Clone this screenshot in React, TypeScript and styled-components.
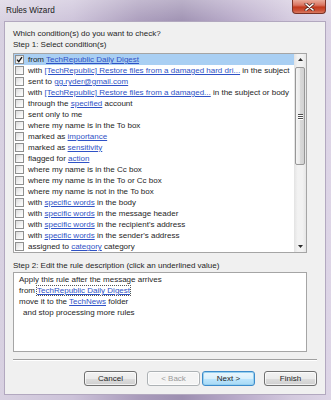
import styled, { createGlobalStyle } from 'styled-components';

const GlobalStyle = createGlobalStyle`
  html, body {
    margin: 0;
    padding: 0;
  }
  body {
    width: 331px;
    height: 400px;
    overflow: hidden;
    background: #fff;
  }
`;

const Window = styled.div`
  width: 331px;
  height: 400px;
  box-sizing: border-box;
  display: flex;
  flex-direction: column;
  font-family: 'Liberation Sans', Arial, sans-serif;
  font-size: 8px;
  color: #1e1e1e;
  background:
    linear-gradient(180deg, rgba(255, 255, 255, 0.3) 0px, rgba(255, 255, 255, 0) 24px),
    linear-gradient(90deg, #d8d1e1 0%, #ccc2d9 22%, #a99bbb 42%, #9d8fb1 55%, #b9abca 72%, #d3c9de 88%, #ddd5e6 100%);
`;

const TitleBar = styled.div`
  height: 21px;
  flex: none;
  display: flex;
  align-items: flex-start;
  justify-content: space-between;
  padding: 0 5px 0 6px;
`;

const Title = styled.div`
  line-height: 21px;
  font-size: 8.2px;
  color: #1a1a1a;
`;

const CloseButton = styled.div`
  width: 34px;
  height: 14px;
  box-sizing: border-box;
  border: 1px solid #7a3327;
  border-top: none;
  border-radius: 0 0 4px 4px;
  background: linear-gradient(180deg, #e9ab9b 0%, #d97461 40%, #c2391d 55%, #cc5238 80%, #d97a62 100%);
  display: flex;
  align-items: center;
  justify-content: center;
`;

const Client = styled.div`
  flex: 1;
  margin: 0 5px 5px 4px;
  background: #f0f0f0;
  border: 1px solid #b2a8bf;
  padding: 6px 8px 0 8px;
  display: flex;
  flex-direction: column;
`;

const Label = styled.div<{ $gap?: number }>`
  line-height: 11px;
  margin-top: ${(p) => p.$gap ?? 0}px;
  white-space: nowrap;
`;

const ListBox = styled.div`
  margin-top: 3px;
  width: 294px;
  height: 200px;
  box-sizing: border-box;
  border: 1px solid #a5a5a5;
  background: #fff;
  display: flex;
  overflow: hidden;
`;

const Rows = styled.div`
  flex: 1;
  display: flex;
  flex-direction: column;
  overflow: hidden;
`;

const Row = styled.div<{ $selected?: boolean }>`
  height: 11px;
  flex: none;
  display: flex;
  align-items: center;
  gap: 4px;
  padding-left: 1px;
  white-space: nowrap;
  background: ${(p) => (p.$selected ? '#a9cff3' : 'transparent')};
`;

const Check = styled.div`
  width: 9px;
  height: 9px;
  flex: none;
  box-sizing: border-box;
  border: 1px solid #8e8f8f;
  background: linear-gradient(135deg, #dcdcdc 0%, #f4f4f4 60%, #fff 100%);
  display: flex;
  align-items: center;
  justify-content: center;
`;

const Link = styled.span<{ $focus?: boolean }>`
  color: #2f52c6;
  text-decoration: underline;
  outline: ${(p) => (p.$focus ? '1px dotted #555' : 'none')};
  outline-offset: 0;
`;

const ScrollBar = styled.div`
  width: 12px;
  flex: none;
  display: flex;
  flex-direction: column;
  background: linear-gradient(90deg, #e3e3e3 0%, #f2f2f2 30%, #f2f2f2 70%, #e6e6e6 100%);
`;

const Arrow = styled.div`
  height: 11px;
  flex: none;
  display: flex;
  align-items: center;
  justify-content: center;
`;

const Thumb = styled.div`
  margin: 2px 1px 0 1px;
  height: 98px;
  box-sizing: border-box;
  border: 1px solid #979797;
  border-radius: 2px;
  background: linear-gradient(90deg, #f4f4f4 0%, #e9e9e9 50%, #d9d9d9 52%, #d2d2d2 100%);
  display: flex;
  flex-direction: column;
  align-items: center;
  justify-content: center;
  gap: 1px;
`;

const Grip = styled.div`
  width: 5px;
  height: 1px;
  background: #4e4e4e;
  box-shadow: 0 1px 0 #fff;
`;

const Spacer = styled.div`
  flex: 1;
`;

const Description = styled.div`
  margin-top: 1px;
  width: 294px;
  height: 80px;
  box-sizing: border-box;
  border: 1px solid #a5a5a5;
  background: #fff;
  padding: 1px 5px;
`;

const DescLine = styled.div<{ $indent?: number }>`
  line-height: 11px;
  padding-left: ${(p) => p.$indent ?? 0}px;
  white-space: nowrap;
`;

const Separator = styled.div`
  margin-top: 7px;
  height: 1px;
  background: #a0a0a0;
  border-bottom: 1px solid #fff;
`;

const Buttons = styled.div`
  margin-top: 10px;
  display: flex;
  justify-content: flex-end;
`;

const Button = styled.div<{ $gap?: number; $disabled?: boolean; $default?: boolean }>`
  width: 53px;
  height: 15px;
  box-sizing: border-box;
  margin-left: ${(p) => p.$gap ?? 0}px;
  border: 1px solid ${(p) => (p.$disabled ? '#adb2b5' : p.$default ? '#3c8bcb' : '#707070')};
  border-radius: 3px;
  display: flex;
  align-items: center;
  justify-content: center;
  color: ${(p) => (p.$disabled ? '#9a9a9a' : '#1e1e1e')};
  background: ${(p) =>
    p.$disabled
      ? '#f4f4f4'
      : p.$default
        ? 'linear-gradient(180deg, #eaf6fd 0%, #d9f0fc 50%, #bee6fd 51%, #a7d9f5 100%)'
        : 'linear-gradient(180deg, #f2f2f2 0%, #ebebeb 50%, #dddddd 51%, #cfcfcf 100%)'};
  box-shadow: ${(p) => (p.$default ? 'inset 0 0 0 1px #98d1ef' : 'inset 0 0 0 1px rgba(255,255,255,0.7)')};
`;

type Part = string | { link: string; focus?: boolean };

const conditions: Part[][] = [
  ['from ', { link: 'TechRepublic Daily Digest' }],
  ['with ', { link: '[TechRepublic] Restore files from a damaged hard dri...' }, ' in the subject'],
  ['sent to ', { link: 'gg.ryder@gmail.com' }],
  ['with ', { link: '[TechRepublic] Restore files from a damaged...' }, ' in the subject or body'],
  ['through the ', { link: 'specified' }, ' account'],
  ['sent only to me'],
  ['where my name is in the To box'],
  ['marked as ', { link: 'importance' }],
  ['marked as ', { link: 'sensitivity' }],
  ['flagged for ', { link: 'action' }],
  ['where my name is in the Cc box'],
  ['where my name is in the To or Cc box'],
  ['where my name is not in the To box'],
  ['with ', { link: 'specific words' }, ' in the body'],
  ['with ', { link: 'specific words' }, ' in the message header'],
  ['with ', { link: 'specific words' }, " in the recipient's address"],
  ['with ', { link: 'specific words' }, " in the sender's address"],
  ['assigned to ', { link: 'category' }, ' category'],
];

const renderParts = (parts: Part[]) =>
  parts.map((part, i) =>
    typeof part === 'string' ? (
      <span key={i}>{part}</span>
    ) : (
      <Link key={i} $focus={part.focus}>
        {part.link}
      </Link>
    ),
  );

const CheckMark = () => (
  <svg width="7" height="7" viewBox="0 0 7 7">
    <path d="M1 3.6 L2.8 5.6 L6 1.2" fill="none" stroke="#111" strokeWidth="1.4" />
  </svg>
);

const ArrowGlyph = ({ up }: { up?: boolean }) => (
  <svg width="5" height="3" viewBox="0 0 5 3">
    <path d={up ? 'M0 3 L2.5 0 L5 3 Z' : 'M0 0 L2.5 3 L5 0 Z'} fill="#2a2a2a" />
  </svg>
);

const CloseGlyph = () => (
  <svg width="11" height="8" viewBox="0 0 11 8">
    <path d="M2 1 L9 7 M9 1 L2 7" stroke="#5a2a22" strokeWidth="3" strokeLinecap="round" />
    <path d="M2 1 L9 7 M9 1 L2 7" stroke="#fff" strokeWidth="1.6" strokeLinecap="round" />
  </svg>
);

export default function App() {
  return (
    <>
      <GlobalStyle />
      <Window>
        <TitleBar>
          <Title>Rules Wizard</Title>
          <CloseButton>
            <CloseGlyph />
          </CloseButton>
        </TitleBar>
        <Client>
          <Label>Which condition(s) do you want to check?</Label>
          <Label>Step 1: Select condition(s)</Label>
          <ListBox>
            <Rows>
              {conditions.map((parts, i) => (
                <Row key={i} $selected={i === 0}>
                  <Check>{i === 0 && <CheckMark />}</Check>
                  <span>{renderParts(parts)}</span>
                </Row>
              ))}
            </Rows>
            <ScrollBar>
              <Arrow>
                <ArrowGlyph up />
              </Arrow>
              <Thumb>
                <Grip />
                <Grip />
                <Grip />
              </Thumb>
              <Spacer />
              <Arrow>
                <ArrowGlyph />
              </Arrow>
            </ScrollBar>
          </ListBox>
          <Label $gap={7}>Step 2: Edit the rule description (click an underlined value)</Label>
          <Description>
            <DescLine>Apply this rule after the message arrives</DescLine>
            <DescLine>
              from <Link $focus>TechRepublic Daily Digest</Link>
            </DescLine>
            <DescLine>
              move it to the <Link>TechNews</Link> folder
            </DescLine>
            <DescLine $indent={4}>and stop processing more rules</DescLine>
          </Description>
          <Separator />
          <Buttons>
            <Button>Cancel</Button>
            <Button $gap={10} $disabled>
              &lt; Back
            </Button>
            <Button $gap={2} $default>
              Next &gt;
            </Button>
            <Button $gap={9}>Finish</Button>
          </Buttons>
        </Client>
      </Window>
    </>
  );
}
